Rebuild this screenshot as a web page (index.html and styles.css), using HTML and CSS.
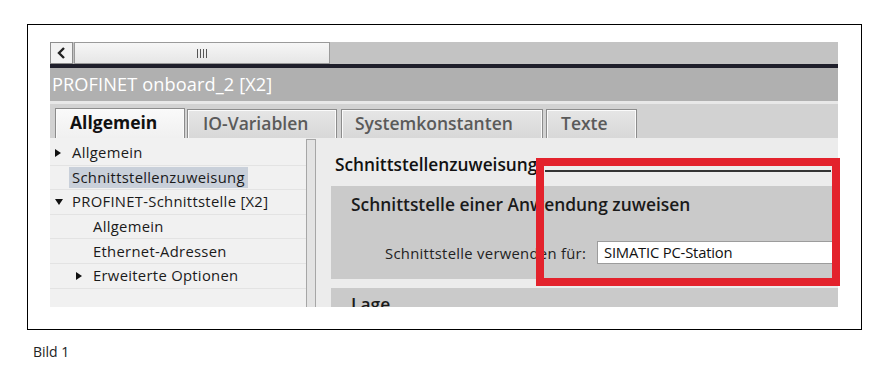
FILE: index.html
```html
<!DOCTYPE html>
<html lang="de">
<head>
<meta charset="utf-8">
<title>PROFINET onboard_2</title>
<link rel="stylesheet" href="styles.css">
</head>
<body>
<div class="frame">
  <div class="ui">
    <div class="scrollrow">
      <div class="sb-btn"><svg width="10" height="12" viewBox="0 0 10 12"><path d="M7 1 L2 6 L7 11" fill="none" stroke="#222" stroke-width="2.4"/></svg></div>
      <div class="sb-thumb"><span class="grip"></span><span class="grip"></span><span class="grip"></span><span class="grip"></span></div>
    </div>
    <div class="darkline"></div>
    <div class="titlebar">PROFINET onboard_2 [X2]</div>
    <div class="strip"></div>
    <div class="tabrow">
      <div class="tab active">Allgemein</div>
      <div class="tab t-io">IO-Variablen</div>
      <div class="tab t-sys">Systemkonstanten</div>
      <div class="tab t-txt">Texte</div>
    </div>
    <div class="body">
      <div class="tree">
        <div class="row"><span class="tri right"></span><span class="lbl">Allgemein</span></div>
        <div class="row"><span class="lbl sel">Schnittstellenzuweisung</span></div>
        <div class="row"><span class="tri down"></span><span class="lbl">PROFINET-Schnittstelle [X2]</span></div>
        <div class="row lvl2"><span class="lbl">Allgemein</span></div>
        <div class="row lvl2"><span class="lbl">Ethernet-Adressen</span></div>
        <div class="row lvl2b"><span class="tri right"></span><span class="lbl">Erweiterte Optionen</span></div>
        <div class="row"></div>
      </div>
      <div class="splitter"></div>
      <div class="content">
        <div class="sechead"><span class="sectitle">Schnittstellenzuweisung</span><span class="secline"></span></div>
        <div class="panel">
          <div class="panelhead">Schnittstelle einer Anwendung zuweisen</div>
          <div class="field">
            <span class="flabel">Schnittstelle verwenden für:</span>
            <span class="finput">SIMATIC PC-Station</span>
          </div>
        </div>
        <div class="panel panel2">
          <div class="panelhead">Lage</div>
        </div>
      </div>
    </div>
  </div>
  <div class="redbox"></div>
</div>
<div class="caption">Bild 1</div>
</body>
</html>
```
FILE: styles.css
```css
* { box-sizing: border-box; }
body {
  margin: 0;
  background: #fff;
  font-family: "Open Sans", "Noto Sans", sans-serif;
  color: #111;
}
.frame {
  position: relative;
  margin: 24px 0 0 27px;
  width: 835px;
  height: 306px;
  border: 1px solid #000;
  padding: 17px 0 0 22px;
}
.ui {
  width: 788px;
  height: 265px;
  overflow: hidden;
  display: flex;
  flex-direction: column;
  background: #ececec;
}
.scrollrow {
  height: 22px;
  flex: none;
  background: #c3c3c3;
  display: flex;
}
.sb-btn {
  width: 23px;
  height: 22px;
  background: #f3f3f3;
  border: 1px solid #8e8e8e;
  display: flex;
  align-items: center;
  justify-content: center;
}
.sb-thumb {
  width: 256px;
  height: 22px;
  background: linear-gradient(#f6f6f6, #e6e6e6);
  border: 1px solid #9a9a9a;
  margin-left: 1px;
  display: flex;
  justify-content: center;
  align-items: center;
  gap: 2px;
}
.grip {
  width: 1px;
  height: 9px;
  background: #555;
}
.darkline {
  height: 4px;
  flex: none;
  background: #1f1f2b;
}
.titlebar {
  height: 33px;
  flex: none;
  background: #b0b0b0;
  color: #fff;
  font-size: 18.2px;
  line-height: 33px;
  padding-left: 2px;
  letter-spacing: 0.1px;
}
.strip {
  height: 3px;
  flex: none;
  background: #e8e8e8;
}
.tabrow {
  height: 34px;
  flex: none;
  background: #d2d2d2;
  display: flex;
  align-items: flex-end;
  padding-left: 5px;
  gap: 2px;
}
.tab {
  height: 29px;
  border: 1px solid #8c8c8c;
  border-bottom: none;
  box-shadow: inset 1px 1px 0 #fbfbfb, inset -1px 0 0 #fbfbfb;
  background: linear-gradient(#e6e6e6, #d8d8d8);
  color: #5a5a5a;
  font-weight: 600;
  font-size: 17.5px;
  line-height: 27px;
  padding-left: 15px;
  white-space: nowrap;
}
.tab.active {
  width: 130px;
  height: 30px;
  background: linear-gradient(#fafafa, #f0f0f0);
  color: #111;
  font-weight: 700;
  padding-left: 14px;
}
.t-io { width: 150px; }
.t-sys { width: 202px; margin-left: 2px; padding-left: 13px; }
.t-txt { width: 91px; margin-left: 1px; padding-left: 14px; }
.body {
  flex: 1;
  display: flex;
  min-height: 0;
}
.tree {
  width: 256px;
  background: #f1f1f1;
  padding-top: 3px;
  font-size: 14.8px;
  letter-spacing: 0.3px;
  color: #1a1a1a;
}
.row {
  height: 24.6px;
  border-bottom: 1px solid #e3e3e3;
  display: flex;
  align-items: center;
  padding-left: 19px;
  position: relative;
  white-space: nowrap;
}
.row.lvl2 { padding-left: 40px; }
.row.lvl2b { padding-left: 40px; }
.lbl { padding: 0 3px; line-height: 21px; }
.lbl.sel { background: #c9d0da; }
.tri {
  position: absolute;
  left: 5px;
  width: 0;
  height: 0;
}
.lvl2b .tri { left: 26px; }
.tri.right {
  border-top: 4.5px solid transparent;
  border-bottom: 4.5px solid transparent;
  border-left: 6px solid #111;
}
.tri.down {
  border-left: 4.5px solid transparent;
  border-right: 4.5px solid transparent;
  border-top: 6px solid #111;
}
.splitter {
  width: 10px;
  margin-top: 1px;
  background: #e3e3e3;
  border: 1px solid #a6a6a6;
  border-bottom: none;
}
.content {
  flex: 1;
  background: #ececec;
  padding-left: 15px;
}
.sechead {
  display: flex;
  align-items: center;
  height: 48px;
  padding: 5px 7px 0 4px;
}
.sectitle {
  font-weight: 600;
  font-size: 17.3px;
  color: #111;
  white-space: nowrap;
}
.secline {
  flex: 1;
  height: 2px;
  background: #333;
  margin-left: 8px;
  margin-top: 12px;
}
.panel {
  background: #cacaca;
  height: 93px;
  padding: 5px 0 0 20px;
}
.panelhead {
  font-size: 17.4px;
  font-weight: 600;
  color: #1a1a1a;
  line-height: 26px;
  white-space: nowrap;
}
.field {
  display: flex;
  align-items: center;
  margin-top: 24px;
  padding-left: 34px;
}
.flabel {
  font-size: 14.8px;
  color: #222;
  letter-spacing: 0.3px;
  width: 212px;
  white-space: nowrap;
}
.finput {
  flex: 1;
  height: 23px;
  background: #fff;
  border: 1px solid #9c9c9c;
  border-right: none;
  font-size: 14.8px;
  line-height: 21px;
  padding-left: 6px;
  letter-spacing: -0.2px;
  color: #111;
  white-space: nowrap;
}
.panel2 {
  margin-top: 9px;
  height: 40px;
  padding-top: 3px;
}
.redbox {
  position: absolute;
  left: 508px;
  top: 133px;
  width: 304px;
  height: 128px;
  border: 8px solid #e3222c;
}
.caption {
  margin: 12px 0 0 33px;
  font-size: 14px;
  color: #222;
}
```
